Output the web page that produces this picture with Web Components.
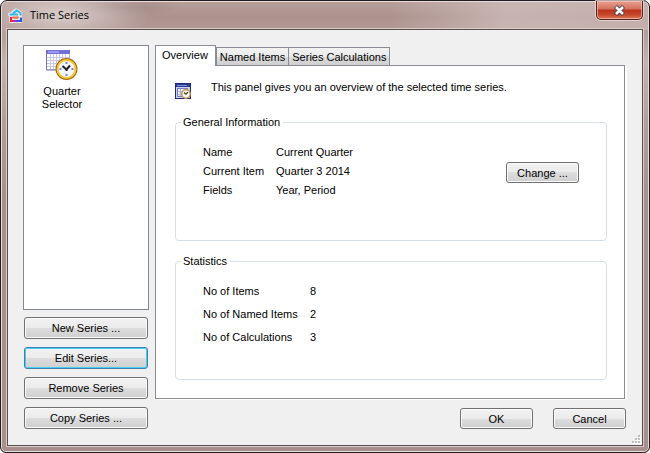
<!DOCTYPE html>
<html lang="en">
<head>
<meta charset="utf-8">
<title>Time Series</title>
<style>
    body {
        margin: 0;
        font-family: "Liberation Sans", Arial, sans-serif;
        font-size: 11px;
        line-height: 14px;
        color: #000;
        background: #fff;
    }

    dl {
        display: grid;
        margin: 0;
    }

    dd {
        margin: 0;
    }

    .intro {
        display: flex;
        gap: 20px;
        margin-bottom: 16px;
    }

    .intro svg {
        margin-top: 3px;
    }

    .intro p {
        margin: 0;
    }

    .info {
        grid-template-columns: 73px 1fr;
        row-gap: 5px;
    }

    .stats {
        grid-template-columns: 107px 1fr;
        row-gap: 9px;
    }
</style>
</head>
<body>
<ts-window caption="Time Series">
    <ts-series-list slot="side"></ts-series-list>
    <ts-button slot="side" wide>New Series ...</ts-button>
    <ts-button slot="side" wide focused>Edit Series...</ts-button>
    <ts-button slot="side" wide>Remove Series</ts-button>
    <ts-button slot="side" wide>Copy Series ...</ts-button>

    <ts-tabs tabs="Overview|Named Items|Series Calculations">
        <div class="intro">
            <svg width="16" height="16" viewBox="0 0 16 16" aria-hidden="true">
                <rect x=".5" y=".5" width="15" height="15" fill="#cdd2ec" stroke="#20297c"/>
                <rect x="1" y="1" width="14" height="3" fill="#2c3a9a"/>
                <path d="M2 2.500h10" stroke="#7f8cd0"/>
                <rect x="2.500" y="5.500" width="10" height="8" fill="#e8ebf8" stroke="#7480c0"/>
                <path d="M3 8.500h7M3 11.500h5M5.500 6v7" stroke="#aab2dc"/>
                <circle cx="11" cy="11" r="4.200" fill="#fffdf4" stroke="#c8954c" stroke-width="1.500"/>
                <path d="M9 9.500L11 11.200l2-2" fill="none" stroke="#333" stroke-width="1.200"/>
            </svg>
            <p>This panel gives you an overview of the selected time series.</p>
        </div>
        <ts-group caption="General Information">
            <dl class="info">
                <dt>Name</dt><dd>Current Quarter</dd>
                <dt>Current Item</dt><dd>Quarter 3 2014</dd>
                <dt>Fields</dt><dd>Year, Period</dd>
            </dl>
            <ts-button slot="action">Change ...</ts-button>
        </ts-group>
        <ts-group caption="Statistics">
            <dl class="stats">
                <dt>No of Items</dt><dd>8</dd>
                <dt>No of Named Items</dt><dd>2</dd>
                <dt>No of Calculations</dt><dd>3</dd>
            </dl>
        </ts-group>
    </ts-tabs>

    <ts-button slot="footer">OK</ts-button>
    <ts-button slot="footer">Cancel</ts-button>
</ts-window>

<template id="window-template">
    <style>
        :host {
            display: flex;
            flex-direction: column;
            box-sizing: border-box;
            min-height: 100vh;
            padding: 0 6px 6px;
            border: 1px solid #211b22;
            border-radius: 7px 7px 6px 6px;
            box-shadow: inset 0 0 0 1px #e6dcda;
            background:
                radial-gradient(ellipse 90px 28px at 60px 14px, rgba(226, 216, 214, .85), transparent),
                radial-gradient(ellipse 60px 10px at 122px 6px, rgba(130, 108, 108, .4), transparent),
                linear-gradient(90deg, transparent 60%, rgba(208, 190, 187, .75) 78%, rgba(208, 190, 187, .6)) 0 0 / 100% 29px no-repeat,
                linear-gradient(#b8a09b 0, #ab928d 16px, #b39a95 29px, #c4b2ae 60px, #b39b97 130px, #a98f8c 200px);
        }

        header {
            display: flex;
            align-items: flex-start;
            height: 28px;
        }

        header svg {
            margin: 7px 6px 0 1px;
        }

        h1 {
            flex: 1;
            margin: 6px 0 0;
            font: 11px/16px "Open Sans", "Noto Sans", sans-serif;
        }

        .close {
            width: 47px;
            height: 19px;
            padding: 0;
            border: 1px solid #4b2323;
            border-top: 0;
            border-radius: 0 0 5px 5px;
            box-shadow: inset 0 0 0 1px rgba(255, 205, 190, .6), 0 0 0 1px rgba(240, 226, 224, .7);
            background: linear-gradient(#e8a193, #d5705c 45%, #bb3219 50%, #c5442a 75%, #de7a58);
        }

        .close svg {
            display: block;
            margin: 0 auto;
        }

        main {
            position: relative;
            display: flex;
            flex: 1;
            gap: 6px;
            padding: 15px 16px 16px 15px;
            border: 1px solid #5a4e4d;
            outline: 1px solid #d9cdcb;
            background: #f0f0f0;
        }

        .side {
            display: flex;
            flex-direction: column;
            flex: 0 0 126px;
            gap: 8px;
        }

        .content {
            display: flex;
            flex: 1;
            flex-direction: column;
            gap: 9px;
            min-width: 0;
        }

        footer {
            display: flex;
            justify-content: flex-end;
            gap: 20px;
        }

        .grip {
            position: absolute;
            right: 1px;
            bottom: 1px;
        }
    </style>
    <header>
        <svg width="16" height="16" viewBox="0 0 16 16" aria-hidden="true">
            <path d="M2 6.500h6M8 2.500l4 2.500v3M4 6l4-3.500M3 9v4h9.500v-3" fill="none" stroke="#f4eef0" stroke-width="4" stroke-linejoin="round" stroke-linecap="round"/>
            <path d="M1.500 6.500H10M5 5.500L9 2M8 2l4.500 3v2.500" fill="none" stroke="#35b3ee" stroke-width="2"/>
            <path d="M2.500 9.500h8" stroke="#ff7043" stroke-width="1.600"/>
            <path d="M3 9v4h3" fill="none" stroke="#ed2350" stroke-width="2.200"/>
            <path d="M6 13h4" stroke="#8540c8" stroke-width="2.200"/>
            <path d="M9.500 13H13V9.500" fill="none" stroke="#2856dc" stroke-width="2.200"/>
        </svg>
        <h1></h1>
        <button class="close" type="button" aria-label="Close">
            <svg width="13" height="11" viewBox="0 0 13 11" aria-hidden="true">
                <path d="M2.500 1.500l8 8M10.500 1.500l-8 8" stroke="#4d4552" stroke-width="4.500"/>
                <path d="M3 2l7 7M10 2L3 9" stroke="#fff" stroke-width="2.600"/>
            </svg>
        </button>
    </header>
    <main>
        <div class="side"><slot name="side"></slot></div>
        <div class="content">
            <slot></slot>
            <footer><slot name="footer"></slot></footer>
        </div>
        <svg class="grip" width="9" height="9" viewBox="0 0 9 9" aria-hidden="true">
            <path d="M7 1h2v2h-2zM4 4h2v2h-2zM7 4h2v2h-2zM1 7h2v2h-2zM4 7h2v2h-2zM7 7h2v2h-2z" fill="#fff"/>
            <path d="M6 0h2v2h-2zM3 3h2v2h-2zM6 3h2v2h-2zM0 6h2v2h-2zM3 6h2v2h-2zM6 6h2v2h-2z" fill="#bdbdbd"/>
        </svg>
    </main>
</template>

<template id="button-template">
    <style>
        :host {
            display: block;
            width: 73px;
        }

        :host([wide]) {
            width: auto;
            margin: 0 1px;
        }

        button {
            display: block;
            box-sizing: border-box;
            width: 100%;
            height: 21px;
            padding: 0;
            border: 1px solid #707070;
            border-radius: 3px;
            box-shadow: inset 0 0 0 1px #fbfbfb;
            background: linear-gradient(#f2f2f2, #ebebeb 50%, #dddddd 50%, #cfcfcf);
            font: inherit;
            color: inherit;
        }

        :host([wide]) button {
            height: 22px;
        }

        :host([focused]) button {
            border-color: #3c7fb1;
            box-shadow: inset 0 0 0 1px #48cdf4;
        }
    </style>
    <button type="button"><slot></slot></button>
</template>

<template id="list-template">
    <style>
        :host {
            display: block;
            flex: 1;
            box-sizing: border-box;
            margin-bottom: -1px;
            padding: 3px 0 0 1px;
            border: 1px solid #828790;
            background: #fff;
        }

        ul {
            margin: 0;
            padding: 0;
            list-style: none;
        }

        li {
            width: 74px;
            line-height: 13px;
            text-align: center;
        }

        svg {
            display: block;
            margin: 0 auto 4px;
        }
    </style>
    <ul>
        <li>
            <svg width="32" height="32" viewBox="0 0 32 32" aria-hidden="true">
                <rect x="0" y="1" width="24" height="20" fill="#b9bedc"/>
                <rect x="1" y="5" width="22" height="15" fill="#fff"/>
                <rect x="0" y="1" width="24" height="4" fill="#6f6fd6"/>
                <path d="M2 3h11" stroke="#c9c9ff"/>
                <path d="M1 8.500h22M1 11.500h22M1 14.500h22M1 17.500h22M4.500 5v15M7.500 5v15M10.500 5v15M13.500 5v15M16.500 5v15M19.500 5v15" stroke="#c5c9e4"/>
                <path d="M.5 1v20H13" fill="none" stroke="#7277b5"/>
                <circle cx="20.500" cy="20" r="10" fill="#f2f4ff" stroke="#a66a10" stroke-width="2"/>
                <circle cx="20.500" cy="20" r="9" fill="none" stroke="#f3c530" stroke-width="2"/>
                <path d="M20.500 13v2M20.500 25v2M13.500 20h2M25.500 20h2" stroke="#7d83c8" stroke-width="2"/>
                <path d="M16.500 17l4 3.500 3.500-4M20.500 20v2" fill="none" stroke="#222" stroke-width="2"/>
            </svg>
            Quarter<br>Selector
        </li>
    </ul>
</template>

<template id="tabs-template">
    <style>
        :host {
            display: flex;
            flex: 1;
            flex-direction: column;
            margin-right: 1px;
        }

        nav {
            display: flex;
            align-items: flex-end;
        }

        button {
            box-sizing: border-box;
            height: 18px;
            padding: 0 3px;
            border: 1px solid #898c95;
            border-bottom: 0;
            background: linear-gradient(#f2f2f2, #ebebeb 50%, #dddddd 50%, #cfcfcf);
            font: inherit;
            color: inherit;
        }

        button + button + button {
            margin-left: -1px;
        }

        button[aria-selected="true"] {
            z-index: 1;
            height: 21px;
            margin-bottom: -1px;
            padding: 0 7px 2px 6px;
            background: #fff;
        }

        section {
            flex: 1;
            padding: 14px 17px 18px 19px;
            border: 1px solid #898c95;
            box-shadow: 2px 1px #fff;
            background: #fff;
        }
    </style>
    <nav role="tablist"></nav>
    <section role="tabpanel"><slot></slot></section>
</template>

<template id="group-template">
    <style>
        :host {
            display: block;
            margin-bottom: 13px;
        }

        :host(:last-of-type) {
            margin-bottom: 0;
        }

        fieldset {
            display: flex;
            align-items: flex-start;
            box-sizing: border-box;
            min-width: 0;
            height: 126px;
            margin: 0;
            padding: 16px 27px 0;
            border: 1px solid #d5dfe5;
            border-radius: 4px;
        }

        legend {
            margin-left: -22px;
            padding: 0 3px 0 2px;
        }

        .body {
            flex: 1;
        }

        ::slotted([slot="action"]) {
            margin-top: 17px;
        }
    </style>
    <fieldset>
        <legend></legend>
        <div class="body"><slot></slot></div>
        <slot name="action"></slot>
    </fieldset>
</template>

<script>
// Base class: clones the given template into an open shadow root.
class TsElement extends HTMLElement {
    constructor(templateId) {
        super();
        this.shadow = this.attachShadow({ mode: 'open' });
        this.shadow.appendChild(document.getElementById(templateId).content.cloneNode(true));
    }
}

class TsWindow extends TsElement {
    constructor() {
        super('window-template');
    }

    connectedCallback() {
        this.shadow.querySelector('h1').textContent = this.getAttribute('caption');
    }
}

class TsButton extends TsElement {
    constructor() {
        super('button-template');
    }
}

class TsSeriesList extends TsElement {
    constructor() {
        super('list-template');
    }
}

class TsTabs extends TsElement {
    constructor() {
        super('tabs-template');
    }

    // Build one tab per name, the first one is selected.
    connectedCallback() {
        const nav = this.shadow.querySelector('nav');
        this.getAttribute('tabs').split('|').forEach((name, i) => {
            const tab = document.createElement('button');
            tab.type = 'button';
            tab.setAttribute('role', 'tab');
            tab.setAttribute('aria-selected', i === 0);
            tab.textContent = name;
            nav.appendChild(tab);
        });
    }
}

class TsGroup extends TsElement {
    constructor() {
        super('group-template');
    }

    connectedCallback() {
        this.shadow.querySelector('legend').textContent = this.getAttribute('caption');
    }
}

window.customElements.define('ts-window', TsWindow);
window.customElements.define('ts-button', TsButton);
window.customElements.define('ts-series-list', TsSeriesList);
window.customElements.define('ts-tabs', TsTabs);
window.customElements.define('ts-group', TsGroup);
</script>
</body>
</html>
